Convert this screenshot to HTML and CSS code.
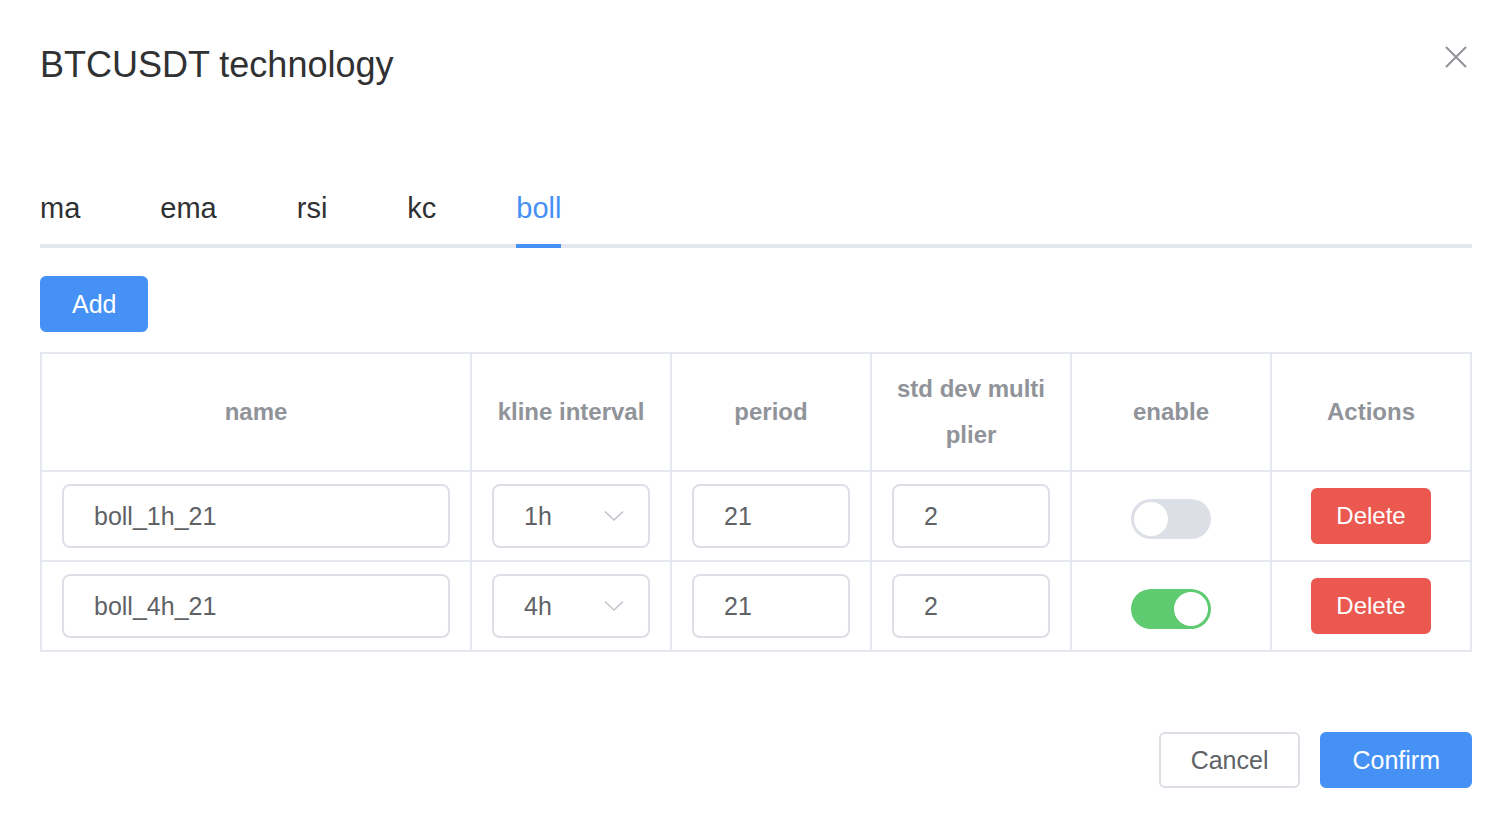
FILE: index.html
```html
<!DOCTYPE html>
<html lang="en">
<head>
<meta charset="utf-8">
<title>BTCUSDT technology</title>
<link rel="stylesheet" href="styles.css">
</head>
<body>
<div class="dialog">
  <div class="dialog-header">
    <span class="dialog-title">BTCUSDT technology</span>
    <button class="close-btn" aria-label="Close">
      <svg width="24" height="24" viewBox="0 0 24 24"><path d="M2 2 L22 22 M22 2 L2 22" stroke="#909399" stroke-width="2" fill="none"/></svg>
    </button>
  </div>
  <div class="dialog-body">
    <div class="tabs">
      <div class="tab">ma</div>
      <div class="tab">ema</div>
      <div class="tab">rsi</div>
      <div class="tab">kc</div>
      <div class="tab active"><span>boll</span></div>
    </div>
    <button class="btn btn-primary btn-add">Add</button>
    <table class="grid">
      <colgroup>
        <col class="c-name"><col class="c-mid"><col class="c-mid"><col class="c-mid"><col class="c-mid"><col class="c-last">
      </colgroup>
      <thead>
        <tr>
          <th>name</th>
          <th>kline interval</th>
          <th>period</th>
          <th><div class="wrap">std dev multiplier</div></th>
          <th>enable</th>
          <th>Actions</th>
        </tr>
      </thead>
      <tbody>
        <tr>
          <td><div class="input">boll_1h_21</div></td>
          <td><div class="input select">1h<svg class="chev" width="20" height="12" viewBox="0 0 20 12"><path d="M1 1.5 L10 10 L19 1.5" stroke="#c0c4cc" stroke-width="1.6" fill="none"/></svg></div></td>
          <td><div class="input">21</div></td>
          <td><div class="input">2</div></td>
          <td><div class="cell-center"><span class="switch"><span class="knob"></span></span></div></td>
          <td><div class="cell-center"><button class="btn btn-danger">Delete</button></div></td>
        </tr>
        <tr>
          <td><div class="input">boll_4h_21</div></td>
          <td><div class="input select">4h<svg class="chev" width="20" height="12" viewBox="0 0 20 12"><path d="M1 1.5 L10 10 L19 1.5" stroke="#c0c4cc" stroke-width="1.6" fill="none"/></svg></div></td>
          <td><div class="input">21</div></td>
          <td><div class="input">2</div></td>
          <td><div class="cell-center"><span class="switch on"><span class="knob"></span></span></div></td>
          <td><div class="cell-center"><button class="btn btn-danger">Delete</button></div></td>
        </tr>
      </tbody>
    </table>
  </div>
  <div class="dialog-footer">
    <button class="btn btn-default">Cancel</button>
    <button class="btn btn-primary">Confirm</button>
  </div>
</div>
</body>
</html>
```

FILE: styles.css
```css
* { box-sizing: border-box; }
html, body {
  margin: 0;
  background: #ffffff;
  font-family: "Liberation Sans", Helvetica, Arial, sans-serif;
}
.dialog {
  width: 1510px;
  min-height: 826px;
  background: #fff;
}
.dialog-header {
  padding: 41px 38px 19px 40px;
  display: flex;
  justify-content: space-between;
  align-items: flex-start;
}
.dialog-title {
  font-size: 36px;
  line-height: 48px;
  color: #303133;
}
.close-btn {
  border: 0;
  background: transparent;
  padding: 0;
  margin: 0 0 0 0;
  width: 32px;
  height: 32px;
  display: flex;
  align-items: center;
  justify-content: center;
}
.dialog-body {
  padding: 60px 38px 60px 40px;
}
.tabs {
  display: flex;
  height: 80px;
  border-bottom: 4px solid #e4e7ed;
  margin-bottom: 28px;
}
.tab {
  font-size: 29px;
  line-height: 80px;
  padding: 0 40px;
  color: #303133;
  height: 80px;
}
.tab:first-child { padding-left: 0; }
.tab:last-child { padding-right: 0; }
.tab.active { color: #4691f6; }
.tab.active span {
  display: inline-block;
  height: 80px;
  border-bottom: 4px solid #4691f6;
}
.btn {
  font-family: inherit;
  font-size: 25px;
  height: 56px;
  padding: 0 30px;
  border-radius: 6px;
  border: 2px solid transparent;
  cursor: pointer;
  display: inline-flex;
  align-items: center;
  justify-content: center;
}
.btn-primary {
  background: #4691f6;
  border-color: #4691f6;
  color: #fff;
}
.btn-default {
  background: #fff;
  border-color: #dcdfe6;
  color: #606266;
}
.btn-danger {
  background: #ea5850;
  border-color: #ea5850;
  color: #fff;
  width: 120px;
  padding: 0;
  font-size: 24px;
}
.btn-add { margin-bottom: 20px; }
.grid {
  width: 1432px;
  border-collapse: collapse;
  table-layout: fixed;
  border: 2px solid #e4e7ed;
}
.c-name { width: 430px; }
.c-mid { width: 200px; }
.c-last { width: 200px; }
.grid th, .grid td {
  border: 2px solid #e4e7ed;
  padding: 12px 20px;
}
.grid th {
  font-size: 24px;
  font-weight: bold;
  color: #909399;
  line-height: 46px;
  text-align: center;
  height: 118px;
}
.wrap { word-break: break-all; }
.grid td { height: 90px; }
.cell-center {
  display: flex;
  justify-content: center;
  align-items: center;
  height: 64px;
}
.input {
  height: 64px;
  border: 2px solid #dcdfe6;
  border-radius: 8px;
  padding: 0 30px;
  font-size: 25px;
  color: #606266;
  display: flex;
  align-items: center;
  background: #fff;
}
.select { justify-content: space-between; padding-right: 24px; }
.chev { display: block; }
.switch {
  display: block;
  position: relative;
  width: 80px;
  height: 40px;
  margin-top: 6px;
  border-radius: 20px;
  background: #dcdfe6;
}
.switch .knob {
  position: absolute;
  top: 3px;
  left: 3px;
  width: 34px;
  height: 34px;
  border-radius: 50%;
  background: #fff;
}
.switch.on { background: #5ecb70; }
.switch.on .knob { left: 43px; }
.dialog-footer {
  padding: 20px 38px 40px 40px;
  display: flex;
  justify-content: flex-end;
  gap: 20px;
}
```
